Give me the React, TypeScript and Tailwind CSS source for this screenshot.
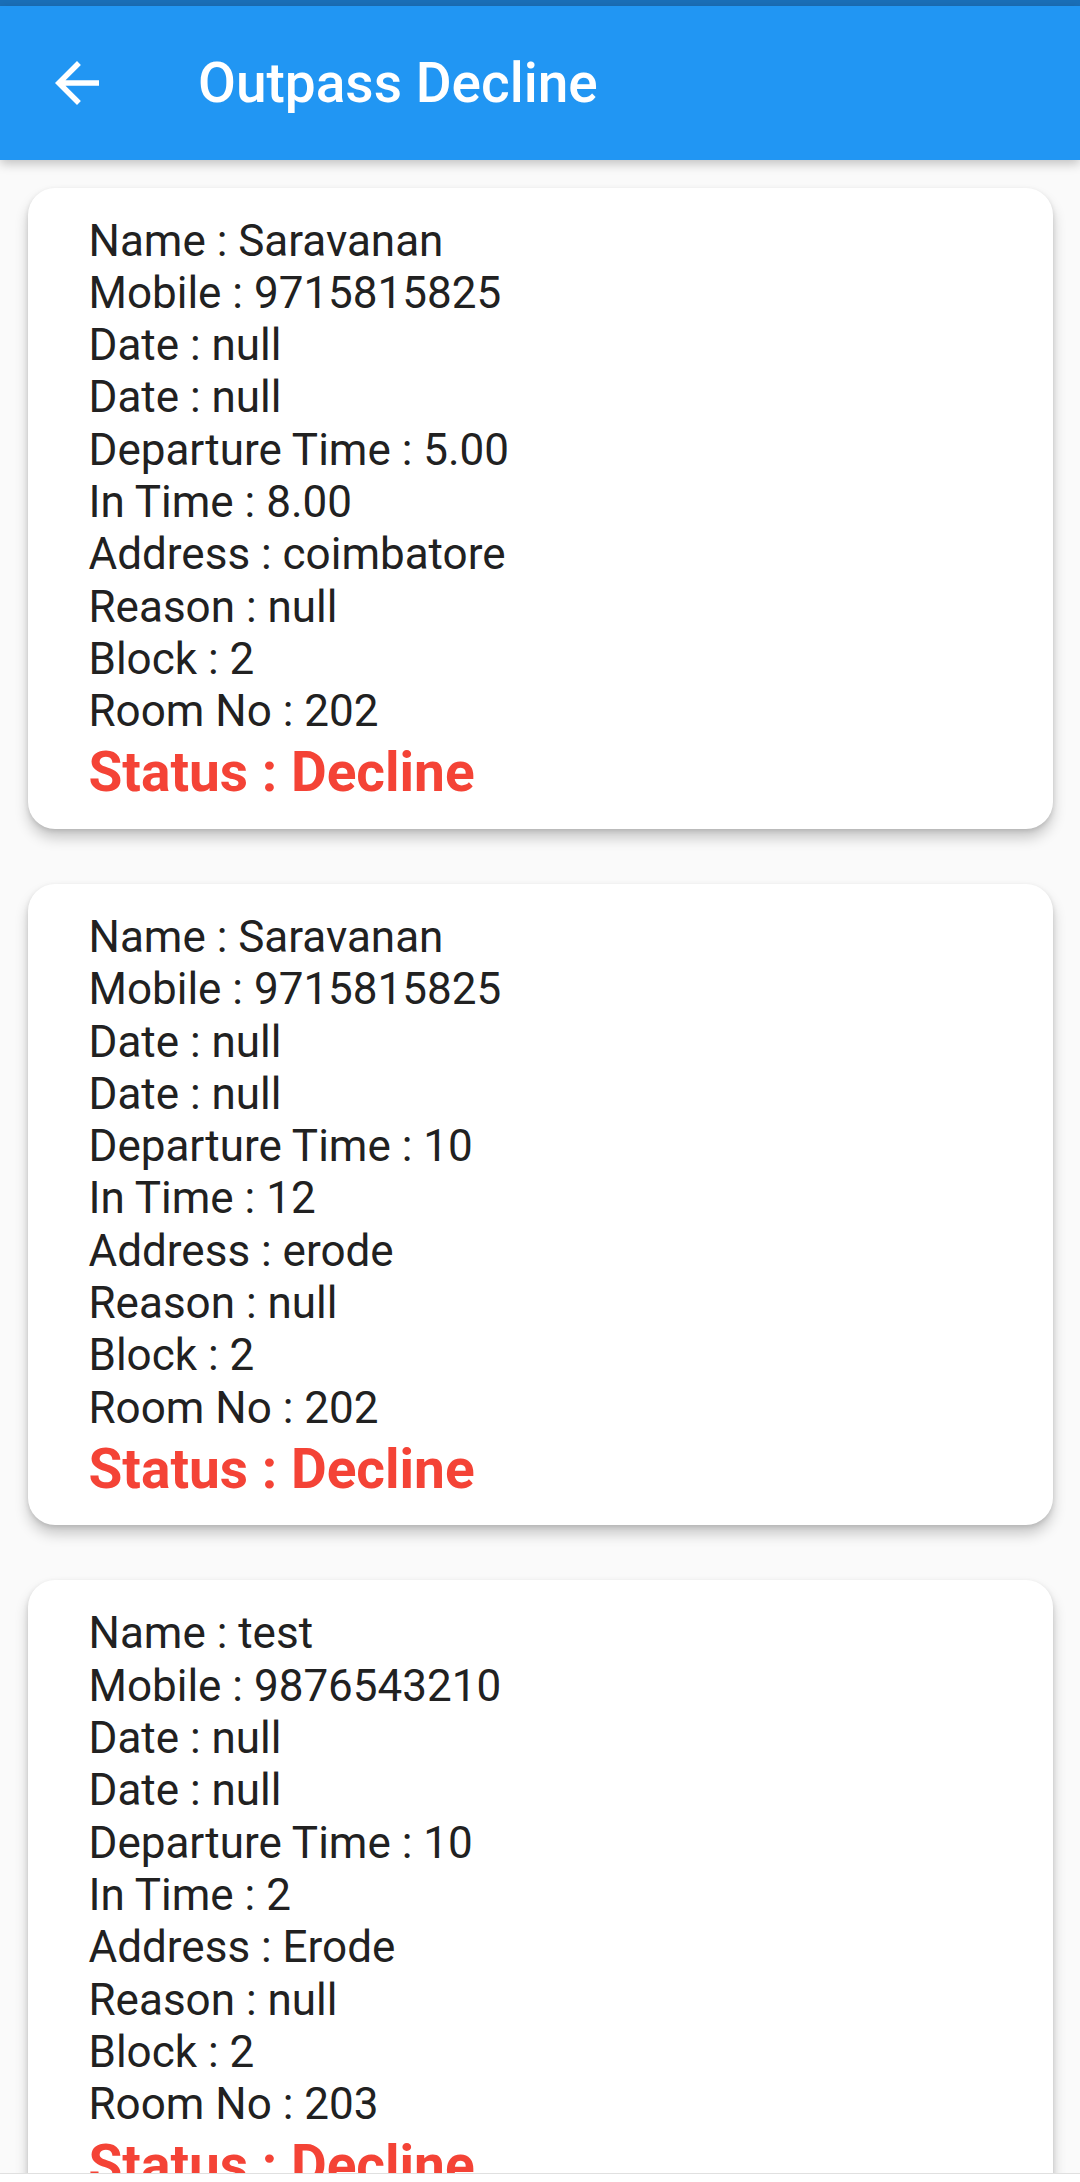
import React from "react";

type Pass = {
  name: string;
  mobile: string;
  departure: string;
  inTime: string;
  address: string;
  room: string;
};

const passes: Pass[] = [
  { name: "Saravanan", mobile: "9715815825", departure: "5.00", inTime: "8.00", address: "coimbatore", room: "202" },
  { name: "Saravanan", mobile: "9715815825", departure: "10", inTime: "12", address: "erode", room: "202" },
  { name: "test", mobile: "9876543210", departure: "10", inTime: "2", address: "Erode", room: "203" },
];

function BackArrow() {
  return (
    <svg viewBox="0 0 24 24" className="w-[66px] h-[66px]" fill="white">
      <path d="M20 11H7.83l5.59-5.59L12 4l-8 8 8 8 1.41-1.41L7.83 13H20v-2z" />
    </svg>
  );
}

function PassCard({ pass }: { pass: Pass }) {
  const rows = [
    `Name : ${pass.name}`,
    `Mobile : ${pass.mobile}`,
    "Date : null",
    "Date : null",
    `Departure Time : ${pass.departure}`,
    `In Time : ${pass.inTime}`,
    `Address : ${pass.address}`,
    "Reason : null",
    "Block : 2",
    `Room No : ${pass.room}`,
  ];
  return (
    <div className="mx-[27.5px] my-[27.5px] bg-white rounded-[27px] shadow-[0_9px_14px_rgba(0,0,0,0.2),0_2px_5px_rgba(0,0,0,0.12)] pt-[27px] pb-[24px] pl-[61px] pr-6 shrink-0">
      {rows.map((r, i) => (
        <div key={i} className="text-[44px] leading-[52.3px] text-[#212121]">
          {r}
        </div>
      ))}
      <div className="mt-[3px] text-[55px] leading-[64.5px] font-bold text-[#f44336]">Status : Decline</div>
    </div>
  );
}

export default function App() {
  return (
    <div className="w-[1080px] h-[2182px] overflow-hidden flex flex-col bg-[#fafafa] font-['Roboto',sans-serif]">
      <div className="h-[6px] bg-[#1a6fb8] shrink-0" />
      <header className="relative z-10 h-[154px] shrink-0 bg-[#2196f3] flex items-center shadow-[0_4px_10px_rgba(0,0,0,0.22)]">
        <div className="ml-[44px] flex items-center">
          <BackArrow />
        </div>
        <h1 className="ml-[88px] text-[55px] font-medium text-white leading-none">Outpass Decline</h1>
      </header>
      <main className="flex-1 min-h-0 overflow-hidden flex flex-col">
        {passes.map((p, i) => (
          <PassCard key={i} pass={p} />
        ))}
      </main>
      <div className="h-[9px] shrink-0 bg-white border-t border-[#e0e0e0]" />
    </div>
  );
}
